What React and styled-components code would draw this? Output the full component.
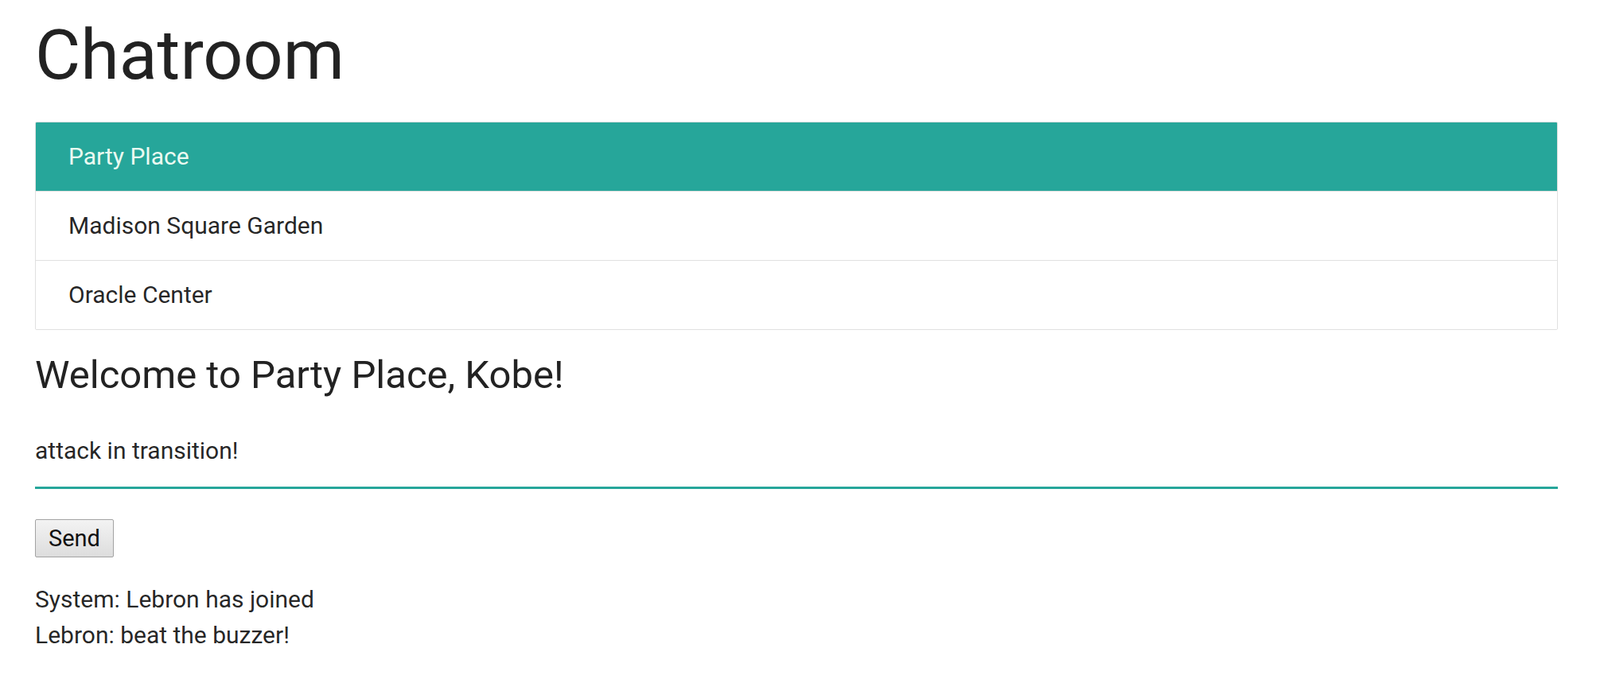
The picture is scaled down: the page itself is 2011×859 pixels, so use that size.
import React, { useState } from "react";
import styled, { createGlobalStyle } from "styled-components";

const GlobalStyle = createGlobalStyle`
  body {
    margin: 0;
    background: #fff;
    font-family: Roboto, "Liberation Sans", sans-serif;
    color: rgba(0, 0, 0, 0.87);
  }
`;

const Page = styled.div`
  padding: 25px 53px 40px 44px;
`;

const Title = styled.h1`
  margin: 0 0 40px;
  font-size: 88px;
  font-weight: 400;
  line-height: 1;
  color: #222;
`;

const RoomList = styled.ul`
  list-style: none;
  margin: 0 0 28px;
  padding: 0;
  border: 1px solid #e0e0e0;
  border-radius: 2px;
  overflow: hidden;
`;

const Room = styled.li`
  padding: 20px 41px;
  font-size: 30px;
  line-height: 46px;
  background: ${(p) => (p.$active ? "#26a69a" : "#fff")};
  color: ${(p) => (p.$active ? "#eafaf1" : "rgba(0, 0, 0, 0.87)")};
  border-bottom: 1px solid #e0e0e0;
  cursor: pointer;

  &:last-child {
    border-bottom: none;
  }
`;

const Welcome = styled.h4`
  margin: 0 0 49px;
  font-size: 49px;
  font-weight: 400;
  line-height: 1.2;
  color: #222;
`;

const MessageInput = styled.input`
  display: block;
  width: 100%;
  box-sizing: border-box;
  height: 64px;
  padding: 0 0 30px;
  margin: 0 0 38px;
  border: none;
  border-bottom: 3px solid #26a69a;
  outline: none;
  background: transparent;
  font-family: Roboto, "Liberation Sans", sans-serif;
  font-size: 30px;
  color: rgba(0, 0, 0, 0.87);
  caret-color: #000;
`;

const SendButton = styled.button`
  display: block;
  height: 48px;
  padding: 0 16px;
  margin: 0 0 30px;
  font-family: Roboto, "Liberation Sans", sans-serif;
  font-size: 29px;
  color: #111;
  background: linear-gradient(#f3f3f3, #dddddd);
  border: 1px solid #a3a3a3;
  border-radius: 2px;
`;

const Messages = styled.div`
  font-size: 30px;
  line-height: 45px;
`;

const rooms = ["Party Place", "Madison Square Garden", "Oracle Center"];

export default function App() {
  const [active, setActive] = useState(0);
  const [text, setText] = useState("attack in transition!");

  return (
    <>
      <GlobalStyle />
      <Page>
        <Title>Chatroom</Title>
        <RoomList>
          {rooms.map((r, i) => (
            <Room key={r} $active={i === active} onClick={() => setActive(i)}>
              {r}
            </Room>
          ))}
        </RoomList>
        <Welcome>Welcome to {rooms[active]}, Kobe!</Welcome>
        <MessageInput autoFocus value={text} onChange={(e) => setText(e.target.value)} />
        <SendButton>Send</SendButton>
        <Messages>
          <div>System: Lebron has joined</div>
          <div>Lebron: beat the buzzer!</div>
        </Messages>
      </Page>
    </>
  );
}
